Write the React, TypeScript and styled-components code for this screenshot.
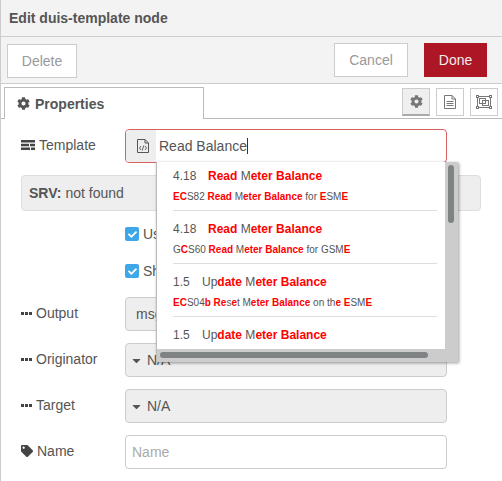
import React from 'react';
import styled, { createGlobalStyle } from 'styled-components';
import { FaCog, FaTag, FaCaretDown, FaCheck } from 'react-icons/fa';

const Global = createGlobalStyle`
  html, body { margin: 0; padding: 0; background: #fff; }
  * { box-sizing: border-box; }
  body { font-family: "Liberation Sans", Arial, sans-serif; font-size: 14px; color: #555; }
`;

const Tray = styled.div`
  position: relative;
  width: 502px;
  height: 481px;
  overflow: hidden;
  background: #fff;
  border-left: 1px solid #ccc;
`;

const Header = styled.div`
  height: 37px;
  background: #f3f3f3;
  border-bottom: 1px solid #ccc;
  padding-left: 8px;
  display: flex;
  align-items: center;
  font-size: 14px;
  font-weight: bold;
  color: #555;
`;

const Toolbar = styled.div`
  height: 47px;
  background: #f3f3f3;
  border-bottom: 1px solid #ccc;
  display: flex;
  align-items: flex-start;
  padding: 6px 15px 0 6px;
`;

const Button = styled.button<{ $primary?: boolean; $w: number; $drop?: boolean }>`
  width: ${p => p.$w}px;
  height: 34px;
  font: 14px "Liberation Sans", Arial, sans-serif;
  margin-top: ${p => (p.$drop ? 1 : 0)}px;
  margin-left: ${p => (p.$primary ? 16 : 0)}px;
  color: ${p => (p.$primary ? '#eee' : '#999')};
  background: ${p => (p.$primary ? '#ad1625' : '#fff')};
  border: 1px solid ${p => (p.$primary ? '#ad1625' : '#ccc')};
  padding: 0;
`;

const Spacer = styled.div`
  flex: 1;
`;

const TabBar = styled.div`
  height: 35px;
  display: flex;
  align-items: flex-end;
  padding: 3px 4px 0 3px;
  border-bottom: 1px solid #bbb;
`;

const Tab = styled.div`
  width: 200px;
  height: 32px;
  margin-bottom: -1px;
  background: #fff;
  border: 1px solid #bbb;
  border-bottom: none;
  display: flex;
  align-items: center;
  gap: 5px;
  padding-left: 12px;
  font-weight: bold;
  color: #555;
`;

const TabIcons = styled.div`
  margin-left: auto;
  display: flex;
  gap: 6px;
  align-self: flex-start;
  margin-top: 1px;
`;

const TabIcon = styled.div<{ $active?: boolean }>`
  width: 28px;
  height: 28px;
  display: flex;
  align-items: center;
  justify-content: center;
  color: #777;
  background: ${p => (p.$active ? '#efefef' : '#fff')};
  border: 1px solid #ccc;
  border-bottom: ${p => (p.$active ? '2px solid #aaa' : '1px solid #ccc')};
`;

const Form = styled.div`
  padding: 10px 20px 0 20px;
  display: flex;
  flex-direction: column;
`;

const Row = styled.div`
  display: flex;
  align-items: center;
  height: 34px;
  margin-bottom: 12px;
`;

const Label = styled.div`
  width: 104px;
  flex: none;
  display: flex;
  align-items: center;
  gap: 4px;
  color: #555;
  position: relative;
  top: -1px;
`;

const InputBox = styled.div<{ $grey?: boolean; $error?: boolean }>`
  width: 322px;
  height: 34px;
  border: 1px solid ${p => (p.$error ? '#d6615f' : '#ccc')};
  border-radius: 4px;
  background: ${p => (p.$grey ? '#eee' : '#fff')};
  display: flex;
  align-items: center;
  overflow: hidden;
  color: #555;
`;

const TypeIcon = styled.div`
  width: 30px;
  height: 100%;
  padding-left: 4px;
  background: #eee;
  display: flex;
  align-items: center;
  justify-content: center;
  flex: none;
`;

const Caret = styled.span`
  width: 1px;
  height: 16px;
  background: #333;
  display: inline-block;
  vertical-align: -3px;
`;

const Value = styled.div`
  padding-left: 3px;
`;

const Muted = styled.div<{ $dark?: boolean }>`
  padding-left: ${p => (p.$dark ? 10 : 6)}px;
  color: ${p => (p.$dark ? '#555' : '#aaa')};
`;

const SelectArrow = styled.div`
  width: 21px;
  display: flex;
  justify-content: center;
  color: #555;
  flex: none;
`;

const Notice = styled.div`
  width: 460px;
  height: 36px;
  background: #eee;
  border: 1px solid #ddd;
  border-radius: 4px;
  display: flex;
  align-items: center;
  gap: 4px;
  padding-left: 7px;
  margin-bottom: 16px;
  b { color: #555; }
`;

const CheckRow = styled.div<{ $gap: number }>`
  display: flex;
  align-items: center;
  gap: 4px;
  height: 14px;
  padding-left: 104px;
  margin-bottom: ${p => p.$gap}px;
  line-height: 13px;
`;

const Check = styled.div`
  width: 14px;
  height: 14px;
  border-radius: 2px;
  background: #3ea7e8;
  color: #fff;
  display: flex;
  align-items: center;
  justify-content: center;
`;

const Dropdown = styled.div`
  position: absolute;
  left: 155px;
  top: 162px;
  width: 302px;
  height: 200px;
  background: #fff;
  border-left: 1px solid #bbb;
  box-shadow: 1px 1px 3px rgba(0, 0, 0, 0.4);
  overflow: hidden;
`;

// the list is scrolled a little, so the first item starts above the box
const Item = styled.div`
  margin: 0 21px 0 16px;
  width: 264px;
  height: 53px;
  border-bottom: 1px solid #ddd;
  padding-top: 11px;
  white-space: nowrap;
  &:first-child { margin-top: -4px; }
`;

const ItemTitle = styled.div`
  font-size: 12px;
  line-height: 14px;
  height: 14px;
  margin-bottom: 8px;
  display: flex;
`;

const Version = styled.span<{ $w: number }>`
  width: ${p => p.$w}px;
  flex: none;
`;

const ItemSub = styled.div`
  font-size: 10px;
  line-height: 12px;
`;

const Hit = styled.b`
  color: #f00;
`;

const VTrack = styled.div`
  position: absolute;
  right: 0;
  top: 0;
  width: 13px;
  height: 200px;
  background: #ccc;
`;

const VThumb = styled.div`
  position: absolute;
  left: 3px;
  top: 3px;
  width: 6px;
  height: 58px;
  border-radius: 3px;
  background: #7f8383;
`;

const HTrack = styled.div`
  position: absolute;
  left: 0;
  bottom: 0;
  width: 100%;
  height: 13px;
  background: #ccc;
`;

const HThumb = styled.div`
  position: absolute;
  left: 3px;
  top: 3px;
  width: 268px;
  height: 6px;
  border-radius: 3px;
  background: #7f8383;
`;

// text with the matched letters marked by [..]
const Marked = ({ text }: { text: string }) => (
  <>
    {text.split(/(\[[^\]]*\])/).map((part, i) =>
      part.startsWith('[') ? <Hit key={i}>{part.slice(1, -1)}</Hit> : <span key={i}>{part}</span>
    )}
  </>
);

const ListIcon = () => (
  <svg width="14" height="10" viewBox="0 0 14 10">
    <path d="M0 0h14v2.500H0zM0 3.700h8v2.500H0zM9 3.700h5v2.500H9zM0 7.400h9V10H0zM10 7.400h4V10h-4z" fill="#444" />
  </svg>
);

const DotsIcon = () => (
  <svg width="11" height="3" viewBox="0 0 11 3">
    <path d="M0 0h3v3H0zM4 0h3v3H4zM8 0h3v3H8z" fill="#444" />
  </svg>
);

const CodeFileIcon = () => (
  <svg width="12" height="14" viewBox="0 0 12 14" fill="none" stroke="#555">
    <path d="M.5.5h7.500l3.500 3.500v9.500H.5z" />
    <path d="M8 .5v3.500h3.500" />
    <path d="M4 7 2.500 9 4 11M8 7l1.500 2L8 11M6.800 6.500 5.200 11.500" strokeWidth=".9" />
  </svg>
);

const DocIcon = () => (
  <svg width="12" height="14" viewBox="0 0 12 14" fill="none" stroke="#777">
    <path d="M.5.5h7.500l3.500 3.500v9.500H.5z" />
    <path d="M8 .5v3.500h3.500M2.500 6.500h7M2.500 8.500h7M2.500 10.500h7" />
  </svg>
);

const FrameIcon = () => (
  <svg width="16" height="14" viewBox="0 0 16 14" fill="none" stroke="#777">
    <rect x="1.500" y="1.500" width="13" height="11" />
    <rect x="3.500" y="3.500" width="6" height="5" />
    <rect x="6.500" y="5.500" width="6" height="5" />
    <g fill="#fff">
      <rect x=".5" y=".5" width="2" height="2" />
      <rect x="13.500" y=".5" width="2" height="2" />
      <rect x=".5" y="11.500" width="2" height="2" />
      <rect x="13.500" y="11.500" width="2" height="2" />
    </g>
  </svg>
);

const results = [
  { version: '4.18', w: 35, title: '[Read] M[eter] [Balance]', sub: '[EC]S82 [Read] M[eter] [Balance] for [E]SM[E]' },
  { version: '4.18', w: 35, title: '[Read] M[eter] [Balance]', sub: 'G[C]S60 [Read] M[eter] [Balance] for GSM[E]' },
  { version: '1.5', w: 29, title: 'Up[date] M[eter] [Balance]', sub: '[EC]S04[b] [Re]s[e]t M[eter] [Balance] on th[e] [E]SM[E]' },
  { version: '1.5', w: 29, title: 'Up[date] M[eter] [Balance]', sub: '' },
];

export default function App() {
  return (
    <Tray>
      <Global />
      <Header>Edit duis-template node</Header>
      <Toolbar>
        <Button $w={70} $drop>Delete</Button>
        <Spacer />
        <Button $w={74}>Cancel</Button>
        <Button $w={63} $primary>Done</Button>
      </Toolbar>
      <TabBar>
        <Tab><FaCog size={13} color="#555" />Properties</Tab>
        <TabIcons>
          <TabIcon $active><FaCog size={13} /></TabIcon>
          <TabIcon><DocIcon /></TabIcon>
          <TabIcon><FrameIcon /></TabIcon>
        </TabIcons>
      </TabBar>
      <Form>
        <Row>
          <Label><ListIcon />Template</Label>
          <InputBox $error>
            <TypeIcon><CodeFileIcon /></TypeIcon>
            <Value>Read Balance<Caret /></Value>
          </InputBox>
        </Row>
        <Notice><b>SRV:</b> not found</Notice>
        <CheckRow $gap={23}><Check><FaCheck size={9} /></Check>Use</CheckRow>
        <CheckRow $gap={19}><Check><FaCheck size={9} /></Check>Show</CheckRow>
        <Row>
          <Label><DotsIcon />Output</Label>
          <InputBox $grey><Muted $dark>msg</Muted></InputBox>
        </Row>
        <Row>
          <Label><DotsIcon />Originator</Label>
          <InputBox $grey><SelectArrow><FaCaretDown size={13} /></SelectArrow>N/A</InputBox>
        </Row>
        <Row>
          <Label><DotsIcon />Target</Label>
          <InputBox $grey><SelectArrow><FaCaretDown size={13} /></SelectArrow>N/A</InputBox>
        </Row>
        <Row>
          <Label><FaTag size={12} color="#444" />Name</Label>
          <InputBox><Muted>Name</Muted></InputBox>
        </Row>
      </Form>
      <Dropdown>
        {results.map((r, i) => (
          <Item key={i}>
            <ItemTitle>
              <Version $w={r.w}>{r.version}</Version>
              <span><Marked text={r.title} /></span>
            </ItemTitle>
            <ItemSub><Marked text={r.sub} /></ItemSub>
          </Item>
        ))}
        <VTrack><VThumb /></VTrack>
        <HTrack><HThumb /></HTrack>
      </Dropdown>
    </Tray>
  );
}
